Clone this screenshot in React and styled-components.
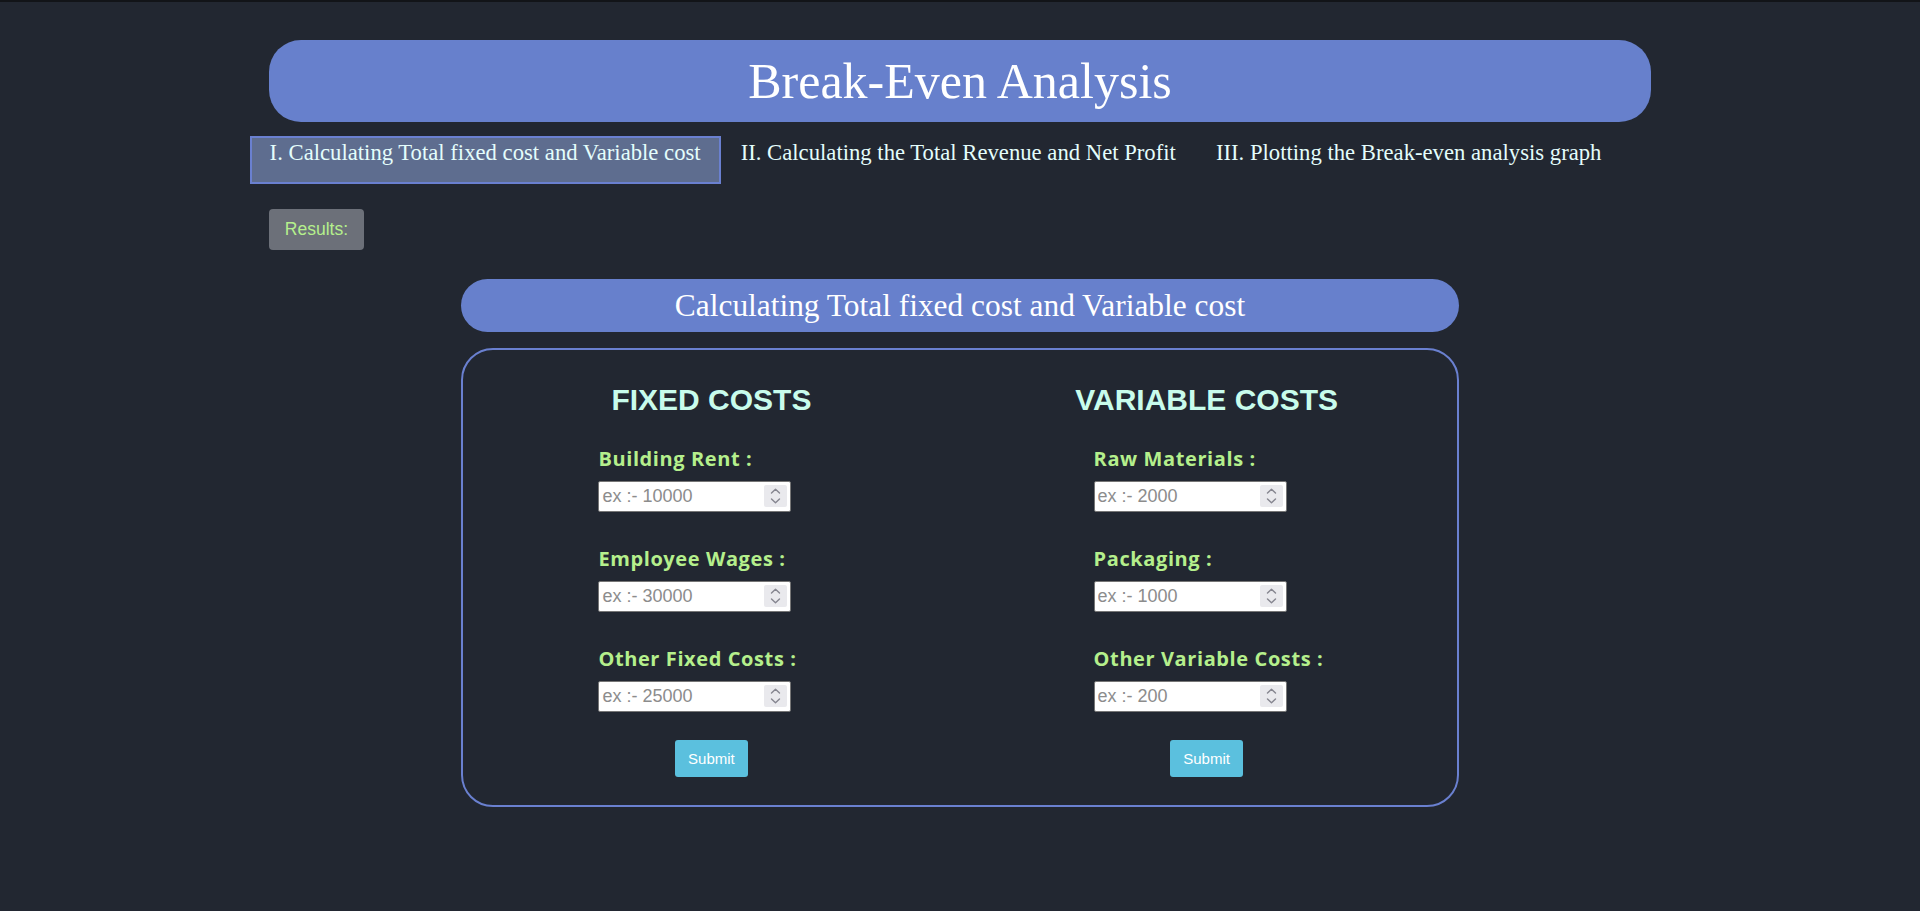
import React from 'react';
import styled, { createGlobalStyle } from 'styled-components';

const GlobalStyle = createGlobalStyle`
    body {
        margin: 0;
        background: #222731;
        border-top: 2px solid #121418;
        min-height: 909px;
        font-family: "Liberation Serif", "Times New Roman", serif;
    }
`;

const Page = styled.div`
    padding-top: 38px;
    padding-bottom: 40px;
`;

const Title = styled.h1`
    width: 72%;
    height: 82px;
    margin: 0 auto;
    display: flex;
    align-items: center;
    justify-content: center;
    background: #6780cc;
    border-radius: 32px;
    color: #fff;
    font-weight: normal;
    font-size: 50px;
`;

const TabBar = styled.nav`
    display: flex;
    margin: 14px 0 0 13%;
`;

const Tab = styled.div`
    height: 48px;
    box-sizing: border-box;
    padding: 2px 18px 0;
    border: 2px solid ${props => (props.active ? '#6a80d0' : 'transparent')};
    background: ${props => (props.active ? '#5e6d8f' : 'transparent')};
    color: #e4fdfc;
    font-size: 22.7px;
    white-space: nowrap;
    cursor: pointer;
`;

const ResultsRow = styled.div`
    margin: 25px 0 0 14%;
`;

const ResultsButton = styled.button`
    height: 41px;
    padding: 0 16px;
    border: none;
    border-radius: 4px;
    background: #6c7079;
    color: #b5ef8c;
    font-family: "Liberation Sans", Arial, sans-serif;
    font-size: 17.5px;
`;

const Section = styled.section`
    width: 52%;
    margin: 29px auto 0;
`;

const SectionTitle = styled.h2`
    height: 53px;
    margin: 0;
    display: flex;
    align-items: center;
    justify-content: center;
    background: #6780cc;
    border-radius: 27px;
    color: #fff;
    font-weight: normal;
    font-size: 31.4px;
`;

const FormBox = styled.div`
    margin-top: 16px;
    border: 2px solid #6a80d0;
    border-radius: 32px;
    padding: 32px 3px 28px 1px;
    display: grid;
    grid-template-columns: 1fr 1fr;
`;

const Column = styled.form`
    display: flex;
    flex-direction: column;
    align-items: center;
`;

const ColumnHeading = styled.h3`
    margin: 0 0 27px;
    line-height: 36px;
    color: #c8fcec;
    font-family: "Liberation Sans", Arial, sans-serif;
    font-weight: bold;
    font-size: 30px;
`;

const Fields = styled.div`
    width: 226px;
    display: flex;
    flex-direction: column;
    gap: 33px;
`;

const Field = styled.div`
    display: flex;
    flex-direction: column;
    align-items: flex-start;
`;

const Label = styled.label`
    line-height: 28px;
    margin-bottom: 8px;
    color: #b5ef8c;
    font-family: "Open Sans", "Noto Sans", sans-serif;
    font-weight: bold;
    font-size: 20px;
    letter-spacing: 0.6px;
    white-space: nowrap;
`;

const InputWrap = styled.div`
    position: relative;
    width: 193px;
    height: 31px;
`;

const NumberInput = styled.input`
    width: 100%;
    height: 100%;
    box-sizing: border-box;
    margin: 0;
    padding: 1px 30px 1px 3px;
    border: 1px solid #767676;
    border-radius: 2px;
    background: #fff;
    font-family: "Liberation Sans", Arial, sans-serif;
    font-size: 18px;
    -moz-appearance: textfield;

    &::placeholder {
        color: #8c8c8c;
    }

    &::-webkit-inner-spin-button,
    &::-webkit-outer-spin-button {
        -webkit-appearance: none;
        margin: 0;
    }
`;

const Spinner = styled.span`
    position: absolute;
    top: 4px;
    right: 4px;
    width: 23px;
    height: 22px;
    background: #e9e9ed;
    border-radius: 2px;
    pointer-events: none;
    display: flex;

    svg {
        display: block;
    }
`;

const SubmitButton = styled.button`
    margin-top: 28px;
    height: 37px;
    padding: 0 13px;
    border: none;
    border-radius: 3px;
    background: #5bc0de;
    color: #fff;
    font-family: "Liberation Sans", Arial, sans-serif;
    font-size: 15px;
`;

const tabs = [
    'I. Calculating Total fixed cost and Variable cost',
    'II. Calculating the Total Revenue and Net Profit',
    'III. Plotting the Break-even analysis graph'
];

const columns = [
    {
        title: 'FIXED COSTS',
        fields: [
            { label: 'Building Rent :', hint: 'ex :- 10000' },
            { label: 'Employee Wages :', hint: 'ex :- 30000' },
            { label: 'Other Fixed Costs :', hint: 'ex :- 25000' }
        ]
    },
    {
        title: 'VARIABLE COSTS',
        fields: [
            { label: 'Raw Materials :', hint: 'ex :- 2000' },
            { label: 'Packaging :', hint: 'ex :- 1000' },
            { label: 'Other Variable Costs :', hint: 'ex :- 200' }
        ]
    }
];

// chrome-like spin buttons, drawn so they always show
const SpinArrows = () => (
    <Spinner>
        <svg width="23" height="22" viewBox="0 0 23 22" fill="none" stroke="#85858f" strokeWidth="1.4" strokeLinecap="round" strokeLinejoin="round">
            <path d="M7.5 8 L11.5 4.2 L15.5 8" />
            <path d="M7.5 14 L11.5 17.8 L15.5 14" />
        </svg>
    </Spinner>
);

export default function App() {
    return (
        <Page>
            <GlobalStyle />
            <Title>Break-Even Analysis</Title>
            <TabBar>
                {tabs.map((t, i) => (
                    <Tab key={i} active={i === 0}>{t}</Tab>
                ))}
            </TabBar>
            <ResultsRow>
                <ResultsButton>Results:</ResultsButton>
            </ResultsRow>
            <Section>
                <SectionTitle>Calculating Total fixed cost and Variable cost</SectionTitle>
                <FormBox>
                    {columns.map(col => (
                        <Column key={col.title} onSubmit={e => e.preventDefault()}>
                            <ColumnHeading>{col.title}</ColumnHeading>
                            <Fields>
                                {col.fields.map(f => (
                                    <Field key={f.label}>
                                        <Label>{f.label}</Label>
                                        <InputWrap>
                                            <NumberInput type="number" placeholder={f.hint} />
                                            <SpinArrows />
                                        </InputWrap>
                                    </Field>
                                ))}
                            </Fields>
                            <SubmitButton type="submit">Submit</SubmitButton>
                        </Column>
                    ))}
                </FormBox>
            </Section>
        </Page>
    );
}
